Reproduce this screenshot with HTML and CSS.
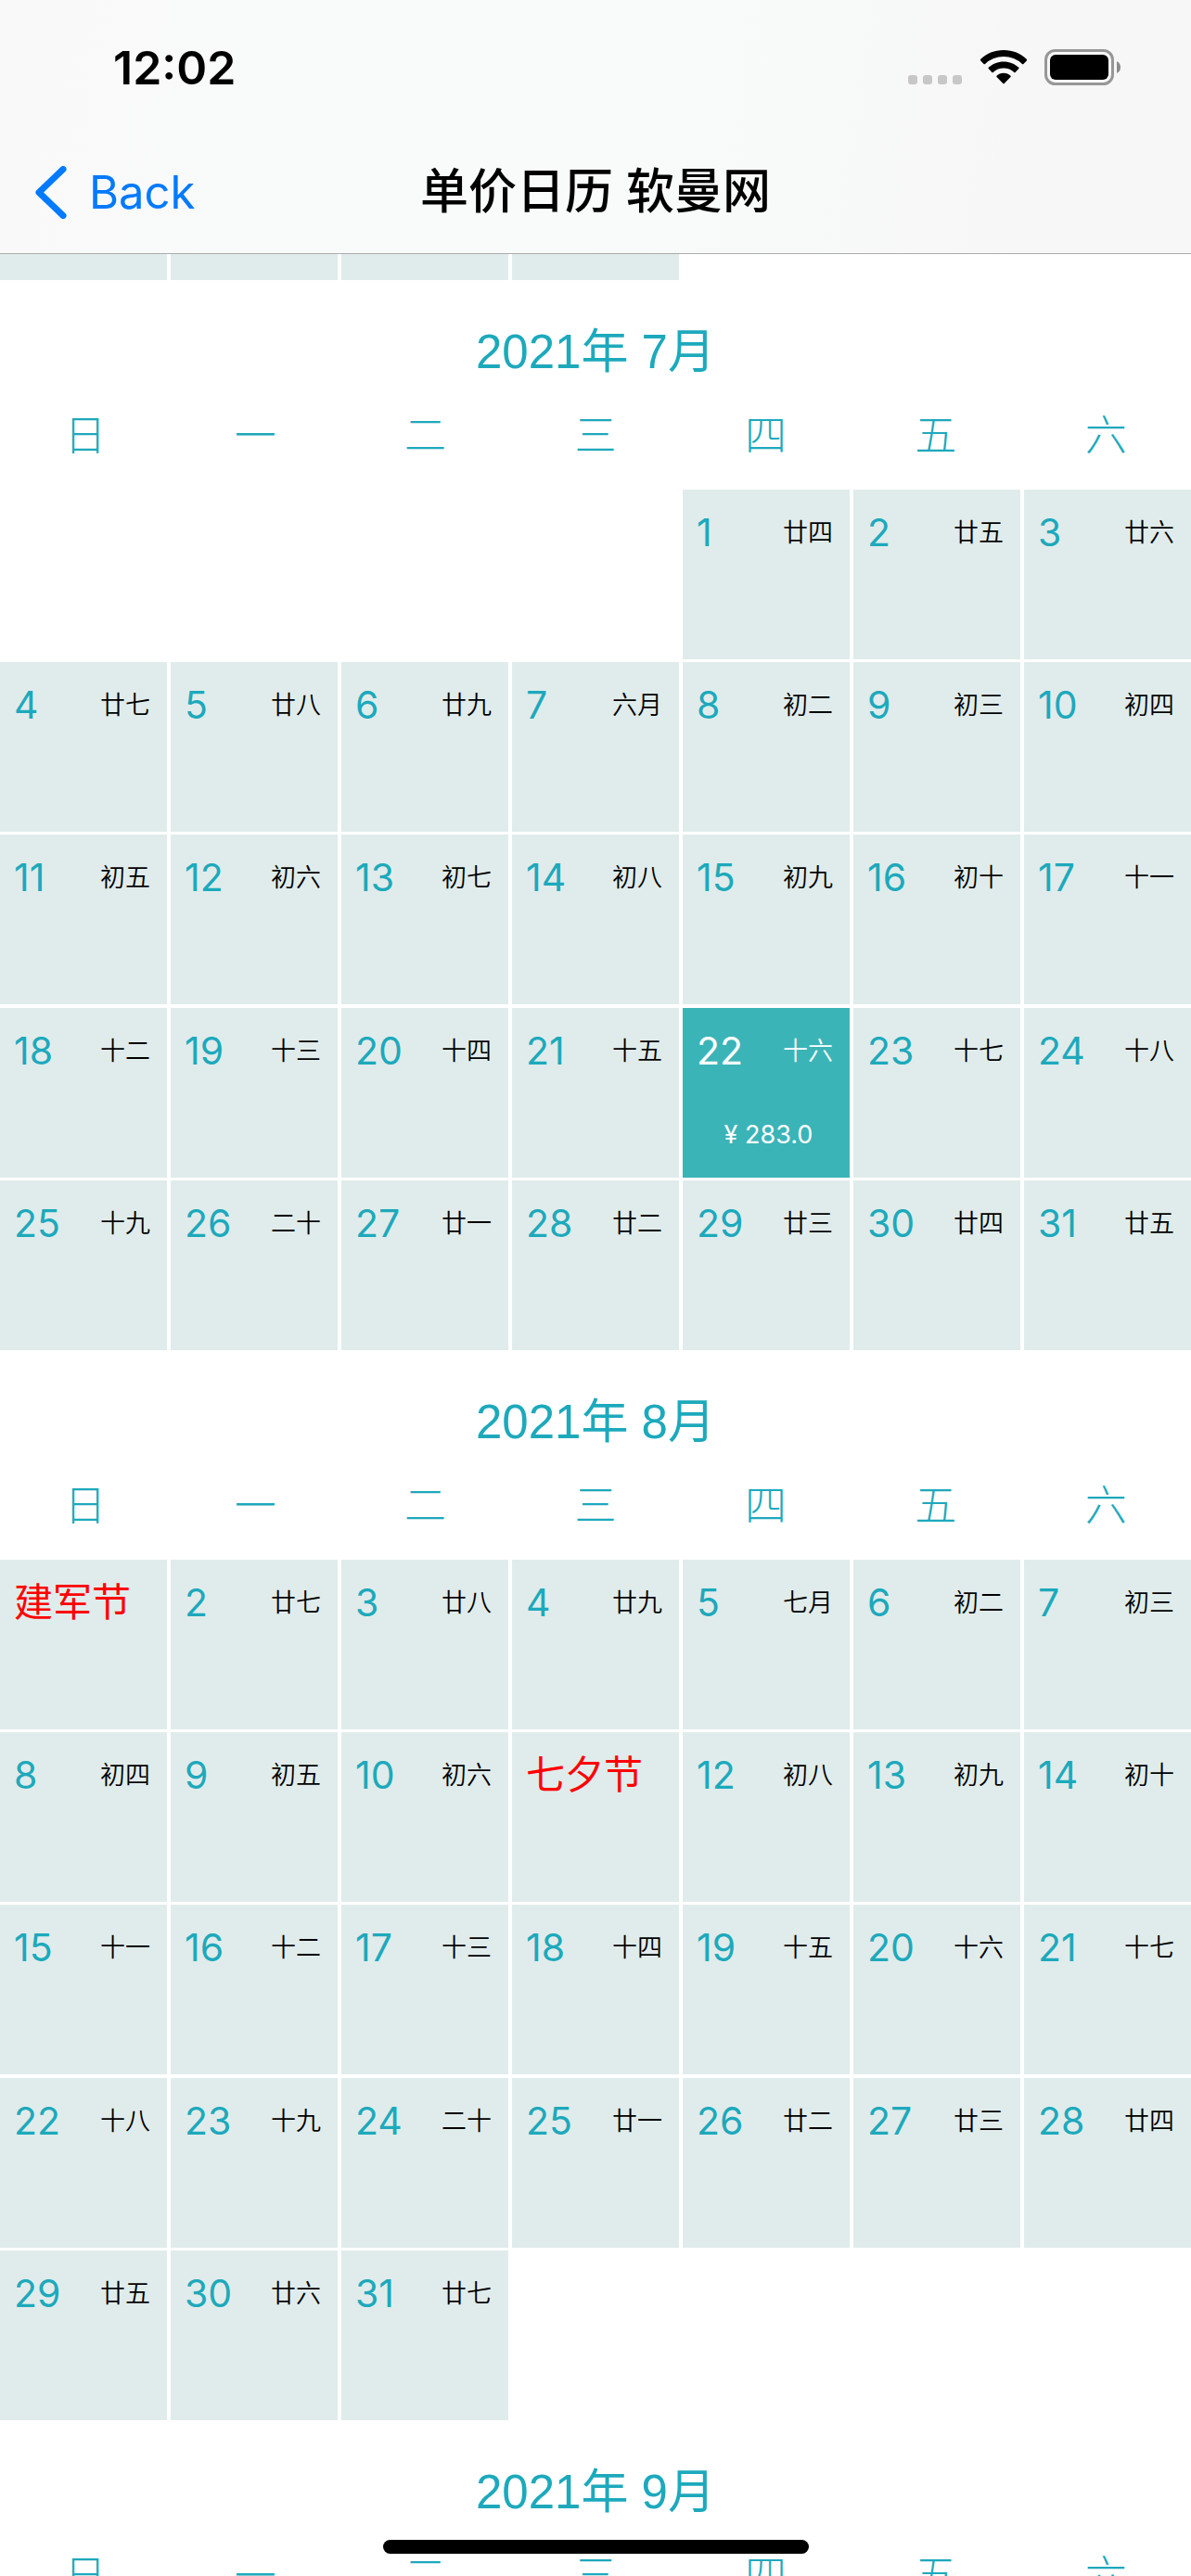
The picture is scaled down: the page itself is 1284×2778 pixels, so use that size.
FILE: index.html
```html
<!DOCTYPE html>
<html lang="zh-CN">
<head>
<meta charset="utf-8">
<meta name="viewport" content="width=device-width, initial-scale=1">
<title>单价日历 软曼网</title>
<link rel="stylesheet" href="styles.css">
</head>
<body>
<div class="app">
  <header class="topbar">
    <div class="status">
      <time class="status-time">12:02</time>
      <div class="status-icons">
        <svg class="icon-cell" viewBox="0 0 58 46" aria-hidden="true">
          <rect x="0" y="31" width="10" height="10" rx="3"/><rect x="16" y="31" width="10" height="10" rx="3"/><rect x="32" y="31" width="10" height="10" rx="3"/><rect x="48" y="31" width="10" height="10" rx="3"/>
        </svg>
        <svg class="icon-wifi" viewBox="0 0 50 37" aria-hidden="true">
          <path d="M25 0C34.700 0 43.500 3.700 50 9.900Q50.500 10.500 50 11.200L46.400 14.900Q45.700 15.500 45 14.900A29 29 0 0 0 5 14.900Q4.300 15.500 3.600 14.900L0 11.200Q-.5 10.500 0 9.900C6.500 3.700 15.300 0 25 0Z"/>
          <path d="M25 12.400C31.300 12.400 37 14.800 41.300 18.800Q41.900 19.500 41.300 20.100L37.600 23.900Q37 24.500 36.300 23.900A16.800 16.800 0 0 0 13.700 23.900Q13 24.500 12.400 23.900L8.700 20.100Q8.100 19.500 8.700 18.800C13 14.800 18.700 12.400 25 12.400Z"/>
          <path d="M25 24.800C27.900 24.800 30.500 25.900 32.500 27.700Q33.100 28.400 32.500 29L25.700 36Q25 36.600 24.300 36L17.500 29Q16.900 28.400 17.500 27.700C19.500 25.900 22.100 24.800 25 24.800Z"/>
        </svg>
        <svg class="icon-battery" viewBox="0 0 82 39" aria-hidden="true">
          <rect class="battery-shell" x="1.500" y="1.500" width="72" height="36" rx="10"/>
          <rect x="6" y="6" width="63" height="27" rx="6"/>
          <path class="battery-cap" d="M78 13Q82 15 82 19.500T78 26Z"/>
        </svg>
      </div>
    </div>
    <nav class="nav">
      <a class="back" href="#">
        <svg class="icon-back" viewBox="0 0 34 57" aria-hidden="true"><path d="M30 3.500L4 28.500L30 53.500"/></svg>
        <span>Back</span>
      </a>
      <h1 class="title">单价日历 软曼网</h1>
    </nav>
  </header>
  <main class="months" id="months"></main>
  <div class="home-indicator"></div>
</div>
<script src="calendar.js"></script>
</body>
</html>
```
FILE: styles.css
```css
* {
  box-sizing: border-box;
}

body {
  margin: 0;
  background: #fff;
  color: #000;
  font-family: Inter, "Noto Sans CJK SC", sans-serif;
}

.app {
  position: relative;
  display: flex;
  flex-direction: column;
  height: 100vh;
}

/* Status and navigation bars */
.topbar {
  flex: none;
  background: linear-gradient(100deg, #f9f9f9, #f9fbfb 50%, #f7f7f7 85%);
  border-bottom: 1px solid #a9abac;
}

.status {
  display: flex;
  justify-content: space-between;
  align-items: center;
  height: 141px;
  padding: 4px 76px 0 122px;
}

.status-time {
  font-size: 50px;
  font-weight: 600;
}

.status-icons {
  display: flex;
  align-items: center;
}

.icon-cell {
  width: 58px;
  height: 46px;
  margin-right: 20px;
  fill: #c7c7c7;
}

.icon-wifi {
  width: 50px;
  height: 37px;
  margin-right: 19px;
}

.icon-battery {
  width: 82px;
  height: 39px;
}

.battery-shell {
  fill: none;
  stroke: #979797;
  stroke-width: 3;
}

.battery-cap {
  fill: #8b8b8b;
}

.nav {
  display: grid;
  grid-template-columns: 1fr auto 1fr;
  align-items: center;
  height: 132px;
  padding: 0 38px;
}

.back {
  display: flex;
  align-items: center;
  gap: 24px;
  color: #007aff;
  font-size: 49px;
  text-decoration: none;
}

.icon-back {
  width: 34px;
  height: 57px;
  fill: none;
  stroke: currentColor;
  stroke-width: 7;
  stroke-linecap: round;
  stroke-linejoin: round;
}

.title {
  margin: 0;
  font-size: 52px;
  font-weight: 500;
  line-height: 72px;
}

/* Calendar */
.months {
  flex: 1;
  min-height: 0;
  overflow: hidden;
}

.month {
  display: block;
  color: #1da9bc;
}

.month-name {
  display: block;
  padding-top: 42px;
  font-family: "Liberation Sans", "Noto Sans CJK SC", sans-serif;
  font-size: 51px;
  line-height: 72px;
  text-align: center;
}

.weekdays {
  display: grid;
  grid-template-columns: repeat(7, 1fr);
  padding: 24px 0 28px;
}

.weekdays th {
  padding: 0;
  font-size: 45px;
  font-weight: 300;
  line-height: 60px;
}

.month thead,
.days {
  display: block;
}

.week {
  display: grid;
  grid-template-columns: repeat(7, 1fr);
  gap: 4px;
}

.week + .week {
  margin-top: 3px;
}

.week:nth-child(4) {
  margin-top: 4px;
}

.week td {
  padding: 0;
}

.day {
  display: grid;
  grid-template-columns: auto auto;
  grid-template-rows: 52px 1fr;
  justify-content: space-between;
  align-items: center;
  width: 100%;
  height: 183px;
  margin: 0;
  padding: 20px 18px 20px 15px;
  border: 0;
  border-radius: 0;
  background: #e0eceb;
  color: #1da9bc;
  font: inherit;
}

.day-number {
  font-size: 41px;
  line-height: 52px;
}

.day-lunar {
  padding-top: 2px;
  color: #000;
  font-size: 27px;
  font-weight: 350;
  line-height: 40px;
}

.day-festival {
  color: #f00;
  font-size: 42px;
  line-height: 52px;
}

.day-price {
  grid-column: 1 / -1;
  align-self: end;
  justify-self: center;
  padding-left: 8px;
  font-size: 27px;
  line-height: 52px;
}

.day.selected,
.day.selected .day-lunar {
  background: #3bb4b8;
  color: #fff;
}

.week.partial .day {
  height: 28px;
  padding: 0;
}

.home-indicator {
  position: absolute;
  bottom: 24px;
  left: 50%;
  width: 459px;
  height: 15px;
  margin-left: -229px;
  border-radius: 8px;
  background: #000;
}
```
FILE: calendar.js
```js
const weekdays = ['日', '一', '二', '三', '四', '五', '六'];

const months = [
  {
    name: '2021年 7月',
    offset: 4,
    lunar: '廿四 廿五 廿六 廿七 廿八 廿九 六月 初二 初三 初四 初五 初六 初七 初八 初九 初十 十一 十二 十三 十四 十五 十六 十七 十八 十九 二十 廿一 廿二 廿三 廿四 廿五'.split(' '),
    festivals: {},
    selected: 22,
    price: '¥ 283.0'
  },
  {
    name: '2021年 8月',
    offset: 0,
    lunar: '廿三 廿七 廿八 廿九 七月 初二 初三 初四 初五 初六 初七 初八 初九 初十 十一 十二 十三 十四 十五 十六 十七 十八 十九 二十 廿一 廿二 廿三 廿四 廿五 廿六 廿七'.split(' '),
    festivals: { 1: '建军节', 11: '七夕节' }
  },
  { name: '2021年 9月', offset: 3, lunar: [], festivals: {} }
];

function dayCell(month, day) {
  const festival = month.festivals[day];
  const selected = month.selected === day;
  const label = festival
    ? `<span class="day-festival">${festival}</span>`
    : `<span class="day-number">${day}</span><span class="day-lunar">${month.lunar[day - 1]}</span>`;
  const price = selected ? `<span class="day-price">${month.price}</span>` : '';
  return `<td><button type="button" class="day${selected ? ' selected' : ''}">${label}${price}</button></td>`;
}

function monthTable(month) {
  const cells = Array(month.offset).fill('<td></td>');
  month.lunar.forEach((_, i) => cells.push(dayCell(month, i + 1)));
  let rows = '';
  if (month.lunar.length) {
    for (let i = 0; i < cells.length; i += 7) {
      rows += `<tr class="week">${cells.slice(i, i + 7).join('')}</tr>`;
    }
  }
  const head = weekdays.map((d) => `<th scope="col">${d}</th>`).join('');
  return `<table class="month"><caption class="month-name">${month.name}</caption>` +
    `<thead><tr class="weekdays">${head}</tr></thead><tbody class="days">${rows}</tbody></table>`;
}

// Tail of the month that is scrolled under the navigation bar
const tail = `<div class="week partial">${'<div class="day"></div>'.repeat(4)}</div>`;

document.getElementById('months').innerHTML = tail + months.map(monthTable).join('');
```
